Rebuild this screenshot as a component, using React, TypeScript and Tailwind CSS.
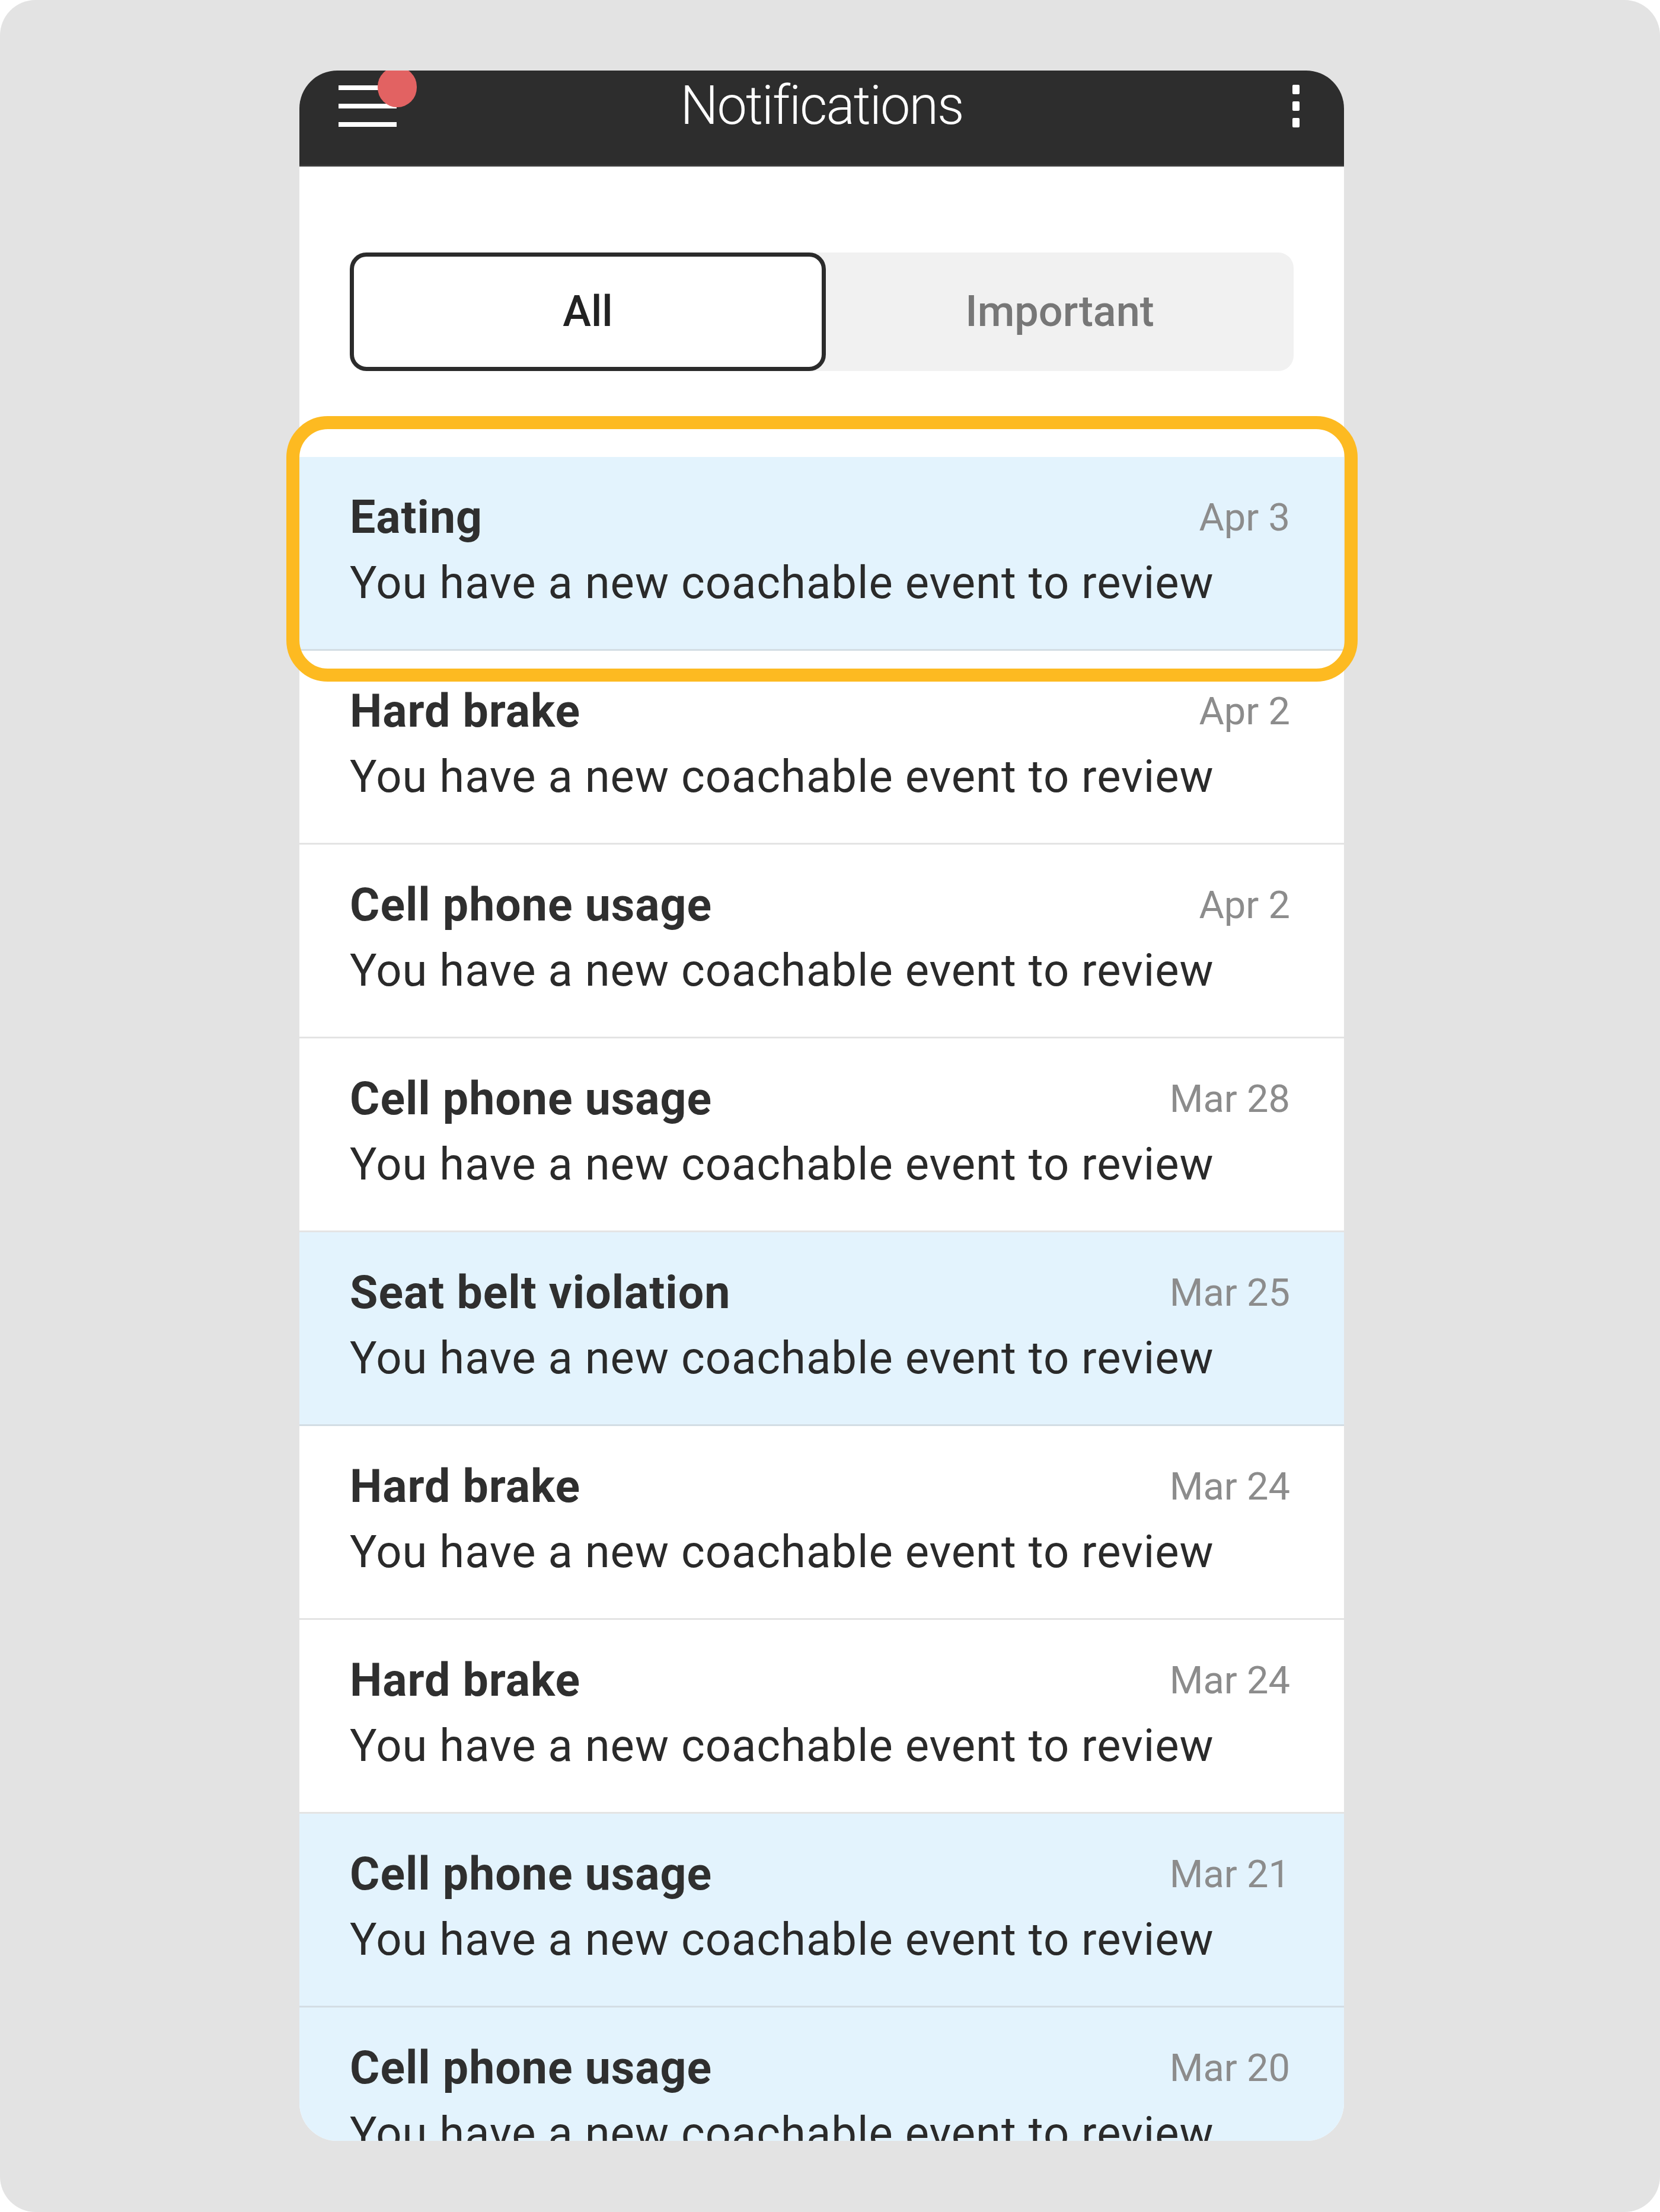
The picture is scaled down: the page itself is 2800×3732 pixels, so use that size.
import React from 'react';

type Note = { title: string; date: string; unread: boolean };

const notes: Note[] = [
  { title: 'Eating', date: 'Apr 3', unread: true },
  { title: 'Hard brake', date: 'Apr 2', unread: false },
  { title: 'Cell phone usage', date: 'Apr 2', unread: false },
  { title: 'Cell phone usage', date: 'Mar 28', unread: false },
  { title: 'Seat belt violation', date: 'Mar 25', unread: true },
  { title: 'Hard brake', date: 'Mar 24', unread: false },
  { title: 'Hard brake', date: 'Mar 24', unread: false },
  { title: 'Cell phone usage', date: 'Mar 21', unread: true },
  { title: 'Cell phone usage', date: 'Mar 20', unread: true },
];

const NoteRow: React.FC<{ note: Note }> = ({ note }) => (
  <div
    className={`h-[327px] shrink-0 flex flex-col pl-[85px] pr-[91px] pt-[62px] border-b-[3px] ${
      note.unread ? 'bg-[#e3f3fd] border-[#d3dde4]' : 'bg-white border-[#e4e4e4]'
    }`}
  >
    <div className="flex justify-between items-center h-[80px]">
      <span className="text-[77px] font-bold text-[#2f2f2f] leading-[80px] tracking-[1px]">{note.title}</span>
      <span className="text-[65px] text-[#8c8c8c] leading-[80px]">{note.date}</span>
    </div>
    <div className="mt-[30px] text-[76px] text-[#2a2a2a] leading-[80px] tracking-[1px] whitespace-nowrap">
      You have a new coachable event to review
    </div>
  </div>
);

export default function App() {
  return (
    <div className="w-[2800px] h-[3732px] bg-white">
      <div className="w-full h-full bg-[#e3e3e3] rounded-[60px] pl-[505px] pt-[119px] font-['Roboto',sans-serif]">
        <div className="relative w-[1762px] h-[3493px]">
          <div className="w-full h-full rounded-[64px] overflow-hidden bg-white flex flex-col">
            <div className="h-[162px] shrink-0 bg-[#2d2d2d] border-b-[3px] border-[#3a3a3a]">
              <div className="relative h-[120px] flex items-center justify-between pl-[66px] pr-[74px]">
                <div className="relative w-[98px] h-[70px] flex flex-col justify-between">
                  <span className="block h-[8px] bg-white" />
                  <span className="block h-[8px] bg-white" />
                  <span className="block h-[8px] bg-white" />
                  <span className="absolute -right-[34px] -top-[31px] w-[66px] h-[68px] rounded-full bg-[#e26262]" />
                </div>
                <h1 className="absolute left-0 right-0 text-center text-[90px] font-light text-white leading-none tracking-[-2px] pointer-events-none">
                  Notifications
                </h1>
                <div className="flex flex-col justify-between h-[72px] w-[14px] items-center">
                  <span className="block w-[12px] h-[16px] bg-white rounded-[2px]" />
                  <span className="block w-[12px] h-[16px] bg-white rounded-[2px]" />
                  <span className="block w-[12px] h-[16px] bg-white rounded-[2px]" />
                </div>
              </div>
            </div>

            <div className="mx-[85px] mt-[145px] h-[200px] shrink-0 flex rounded-[26px] bg-[#f1f1f1]">
              <button className="flex-1 rounded-[28px] border-[7px] border-[#2b2b2b] bg-white text-[72px] font-medium text-[#222]">
                All
              </button>
              <button className="flex-1 text-[72px] font-medium text-[#777]">Important</button>
            </div>

            <div className="mt-[145px] flex flex-col">
              {notes.map((n, i) => (
                <NoteRow key={i} note={n} />
              ))}
            </div>
          </div>

          <div className="absolute left-[-22px] right-[-23px] top-[583px] h-[448px] rounded-[70px] border-[22px] border-[#fdba21] pointer-events-none" />
        </div>
      </div>
    </div>
  );
}
